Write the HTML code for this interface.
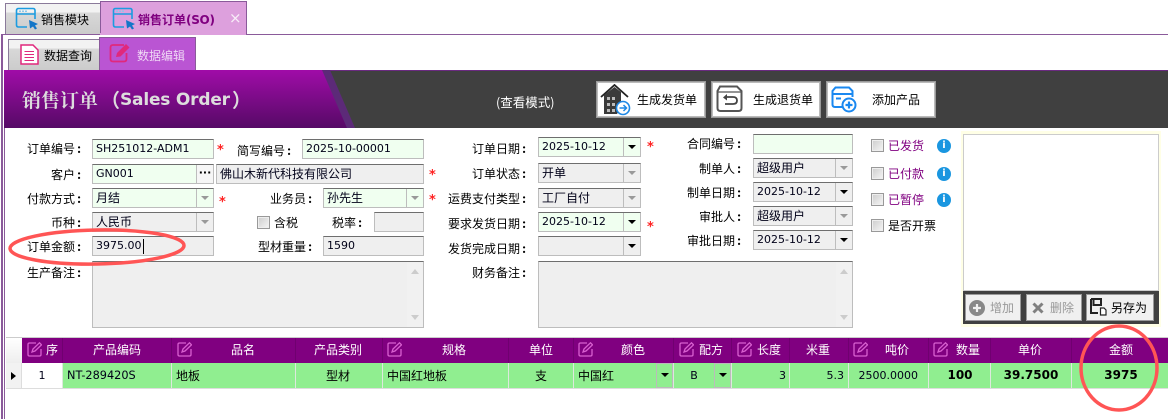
<!DOCTYPE html>
<html lang="zh"><head><meta charset="utf-8"><title>销售订单</title>
<style>
html,body{margin:0;padding:0;background:#fff}
#p{position:relative;width:1168px;height:419px;overflow:hidden;background:#fff;font:12px/16px "WenQuanYi Zen Hei","Noto Sans CJK SC",sans-serif;color:#000}
#p div,#p span,#p svg{position:absolute;box-sizing:border-box;white-space:nowrap}
.lb{text-align:right;height:16px;padding-right:1px}
.lb span{position:static!important;display:inline-block;width:6px;text-align:right;font-weight:bold}
.f{border:1px solid #bdbdbd;border-top-color:#6e6e6e;background:#efefef;height:20px;padding-left:3px;line-height:18px;color:#000018;font-family:"DejaVu Sans","WenQuanYi Zen Hei",sans-serif;font-size:11px}
.cj{font-family:"WenQuanYi Zen Hei","Noto Sans CJK SC",sans-serif;font-size:12px}
.g{background:#f0fff0}
.ar{right:0;top:0;bottom:0;width:17px;border-left:1px solid #bdbdbd}
.ar:after{content:"";position:absolute;left:4px;top:7px;border:4px solid transparent;border-top:4px solid #000;border-bottom:0}
.dis:after{border-top-color:#999}
.st{color:#f22;font:bold 13px/13px "DejaVu Sans",sans-serif}
.cb{width:13px;height:13px;border:1px solid #999;background:linear-gradient(135deg,#ccc,#f6f6f6);box-shadow:inset 0 0 0 1px #eee}
.pu{color:#800080}
.i{width:14px;height:14px;border-radius:50%;background:#1a96e0;color:#fff;text-align:center;font:bold 10px/14px "DejaVu Sans",sans-serif}
.b{background:#fff;border:1px solid #999;box-shadow:inset 0 0 0 1px #bbb;height:37px;top:81px;width:110px}
.h{top:338px;height:25px;line-height:24px;color:#fff;text-align:center;transform:translateX(-50%)}
.ic{top:342px;width:15px;height:15px}
.s{top:363px;width:1px;height:25px;background:#dde8dd}
.hs{top:338px;width:1px;height:25px;background:#700070}
.c{top:363px;height:25px;line-height:25px;font-size:12px}
.n{font-family:"DejaVu Sans",sans-serif;font-size:11px;color:#000018}
.ct{transform:translateX(-50%)}
.bd{font:bold 12px/25px "DejaVu Sans",sans-serif}
.bt{background:#f0f0f0;border:1px solid #999;top:294px;height:27px;line-height:26px}
</style></head><body><div id="p">

<!-- top tabs -->
<div style="left:5px;top:3px;width:96px;height:32px;border:1px solid #8a7a9a;border-bottom:0;background:linear-gradient(#f2f2f2 0,#f2f2f2 8px,#d8d8d8 9px,#cbcbcb 100%)"></div>
<svg style="left:15px;top:7px" width="23" height="23" viewBox="0 0 23 23"><path d="M12 20H3.500Q1.500 20 1.500 18V3.500Q1.500 1.500 3.500 1.500H18Q20 1.500 20 3.500V12M2 7H20" fill="none" stroke="#1c9ce0" stroke-width="1.600"/><path d="M4 4.300h2M7 4.300h2M10 4.300h2" stroke="#8cc8ea" stroke-width="1.500"/><path d="M14 13l9 4-3 1.500 2 3-2 1-2-3-3 2z" fill="#1476c8"/></svg>
<div style="left:41px;top:12px">销售模块</div>
<div style="left:100px;top:1px;width:147px;height:34px;border:1px solid #8a5a9a;border-bottom:0;background:#dda0dd"></div>
<svg style="left:112px;top:7px" width="23" height="23" viewBox="0 0 23 23"><path d="M12 20H3.500Q1.500 20 1.500 18V3.500Q1.500 1.500 3.500 1.500H18Q20 1.500 20 3.500V12M2 7H20" fill="none" stroke="#1c9ce0" stroke-width="1.600"/><path d="M4 4.300h2M7 4.300h2M10 4.300h2" stroke="#8cc8ea" stroke-width="1.500"/><path d="M14 13l9 4-3 1.500 2 3-2 1-2-3-3 2z" fill="#1476c8"/></svg>
<div style="left:138px;top:10px;color:#800080;font-weight:bold;font-size:12px;line-height:20px">销售订单<span style="position:static;font:bold 12px 'DejaVu Sans',sans-serif;letter-spacing:-.3px">(SO)</span></div>
<div style="left:229px;top:8px;color:#f8eef8;font:15px/20px 'DejaVu Sans',sans-serif">×</div>

<!-- outer frame -->
<div style="left:1px;top:34px;width:1167px;height:1px;background:#8a5a9a"></div>
<div style="left:100px;top:33px;width:146px;height:2px;background:#dda0dd"></div>
<div style="left:1px;top:34px;width:2px;height:385px;background:#8a5a9a"></div>
<div style="left:4px;top:70px;width:1px;height:349px;background:#8a5a9a"></div>

<!-- sub tabs -->
<div style="left:8px;top:39px;width:92px;height:32px;border:1px solid #8a7a9a;border-bottom:0;background:linear-gradient(#f2f2f2 0,#f2f2f2 8px,#d8d8d8 9px,#cbcbcb 100%)"></div>
<svg style="left:20px;top:44px" width="19" height="21" viewBox="0 0 19 21"><path d="M1 1H13L18 6V20H1Z" fill="#fff" stroke="#e0287c" stroke-width="1.500"/><path d="M4.500 7.500H14M4.500 10.500H14M4.500 13.500H14M4.500 16.500H14" stroke="#e0287c" stroke-width="1"/></svg>
<div style="left:44px;top:48px;color:#000">数据查询</div>
<div style="left:99px;top:37px;width:97px;height:34px;border:1px solid #8a5a9a;border-bottom:0;background:#ba55d3"></div>
<svg style="left:109px;top:43px" width="22" height="20" viewBox="0 0 22 20"><path d="M15 2H4Q1.500 2 1.500 4.500V16Q1.500 18.500 4 18.500H15Q17.500 18.500 17.500 16V10" fill="none" stroke="#e0287c" stroke-width="1.800"/><path d="M7 14l1-4L17 1l3.500 3.500L11.500 13.500z" fill="#e0287c"/></svg>
<div style="left:137px;top:48px;color:#efd8f5">数据编辑</div>

<!-- header -->
<div style="left:4px;top:70px;width:1164px;height:58px;background:#404040;border-top:1px solid #6a2a80"></div>
<svg style="left:4px;top:70px" width="360" height="58" viewBox="0 0 360 58"><defs><linearGradient id="hg" x1="0" y1="0" x2="0" y2="1"><stop offset="0" stop-color="#a00ca8"/><stop offset="1" stop-color="#560a66"/></linearGradient></defs><path d="M317 0H326L351 58H342Z" fill="#5c2a78"/><path d="M0 0H318L343 58H0Z" fill="url(#hg)"/></svg>
<div style="left:22px;top:88px;color:#ddd;font:bold 19px/24px 'Noto Serif CJK SC','Noto Sans CJK SC',serif">销售订单</div>
<div style="left:101px;top:88px;color:#ddd;font:bold 19px/24px 'Noto Sans CJK SC',sans-serif">（</div>
<div style="left:120px;top:88px;color:#ddd;font:bold 17px/24px 'DejaVu Sans',sans-serif;letter-spacing:-.2px">Sales Order</div>
<div style="left:232px;top:88px;color:#ddd;font:bold 19px/24px 'Noto Sans CJK SC',sans-serif">）</div>
<div style="left:496px;top:94px;color:#fff;font-size:12.500px">(查看模式)</div>

<div class="b" style="left:596px"></div>
<svg style="left:600px;top:84px" width="31" height="32" viewBox="0 0 31 32"><path d="M1 13L14.500 1 28 13" fill="none" stroke="#222" stroke-width="1.800"/><path d="M4 11L14.500 3 21 8V23L17 30H4Z" fill="#3a3a3a"/><path d="M7 13h3v3H7zM12 13h3v3h-3zM7 19h3v3H7zM12 19h3v3h-3zM7 25h3v3H7zM12 25h3v3h-3z" fill="#bbb"/><circle cx="23" cy="24" r="6.500" fill="#fff" stroke="#1e88e5" stroke-width="1.600"/><path d="M19.500 24H26M23.500 21L26.500 24 23.500 27" fill="none" stroke="#1e88e5" stroke-width="1.500"/></svg>
<div style="left:637px;top:92px">生成发货单</div>
<div class="b" style="left:711px"></div>
<svg style="left:716px;top:85px" width="27" height="28" viewBox="0 0 27 28"><path d="M4 1.500H21L25.500 6V23Q25.500 26 22.500 26H4.500Q1.500 26 1.500 23V6Z" fill="none" stroke="#555" stroke-width="2"/><path d="M2 7H25" stroke="#555" stroke-width="1.200"/><path d="M9 12H17Q21 12 21 15.500T17 19H9" fill="none" stroke="#444" stroke-width="1.800"/><path d="M11 9L7 12.500 11 15.500Z" fill="#444"/></svg>
<div style="left:753px;top:92px">生成退货单</div>
<div class="b" style="left:826px"></div>
<svg style="left:831px;top:86px" width="26" height="27" viewBox="0 0 26 27"><path d="M13 21H4Q1.500 21 1.500 18.500V5L4.500 1.500H18L21.500 5V11M2 8H21M5 12.500H10" fill="none" stroke="#1a88f0" stroke-width="2"/><circle cx="18" cy="19" r="6.500" fill="#fff" stroke="#1a88f0" stroke-width="2"/><path d="M14.500 19H21.500M18 15.500V22.500" stroke="#1a88f0" stroke-width="2.200"/></svg>
<div style="left:872px;top:92px">添加产品</div>

<!-- left col labels -->
<div class="lb" style="left:12px;width:70px;top:141px">订单编号<span>:</span></div>
<div class="lb" style="left:222px;width:70px;top:143px">简写编号<span>:</span></div>
<div class="lb" style="left:12px;width:70px;top:167px">客户<span>:</span></div>
<div class="lb" style="left:12px;width:70px;top:191px">付款方式<span>:</span></div>
<div class="lb" style="left:243px;width:70px;top:191px">业务员<span>:</span></div>
<div class="lb" style="left:12px;width:70px;top:215px">币种<span>:</span></div>
<div class="lb" style="left:293px;width:70px;top:215px">税率<span>:</span></div>
<div class="lb" style="left:12px;width:70px;top:239px">订单金额<span>:</span></div>
<div class="lb" style="left:243px;width:70px;top:239px">型材重量<span>:</span></div>
<div class="lb" style="left:12px;width:70px;top:265px">生产备注<span>:</span></div>

<div class="f g" style="left:92px;top:139px;width:122px">SH251012-ADM1</div>
<div class="st" style="left:217px;top:144px">*</div>
<div class="f g" style="left:302px;top:139px;width:122px">2025-10-00001</div>
<div class="f g" style="left:92px;top:164px;width:122px">GN001<div style="right:0;top:0;bottom:0;width:17px;border-left:1px solid #bdbdbd;background:#f6f6f6;color:#000;font:bold 11px/16px 'DejaVu Sans',sans-serif;text-align:center">···</div></div>
<div class="f cj" style="left:216px;top:164px;width:208px">佛山木新代科技有限公司</div>
<div class="st" style="left:429px;top:169px">*</div>
<div class="f g cj" style="left:92px;top:188px;width:122px">月结<div class="ar dis"></div></div>
<div class="st" style="left:219px;top:196px">*</div>
<div class="f g cj" style="left:323px;top:188px;width:101px">孙先生<div class="ar dis"></div></div>
<div class="st" style="left:429px;top:194px">*</div>
<div class="f cj" style="left:92px;top:212px;width:122px">人民币<div class="ar dis"></div></div>
<div class="cb" style="left:257px;top:216px"></div>
<div style="left:274px;top:215px">含税</div>
<div class="f" style="left:374px;top:212px;width:50px"></div>
<div class="f" style="left:92px;top:236px;width:122px">3975.00<div style="left:50px;top:2px;width:1px;height:15px;background:#000"></div></div>
<div class="f" style="left:323px;top:236px;width:101px">1590</div>
<div class="f" style="left:92px;top:261px;width:332px;height:67px"><div style="right:0;top:0;bottom:0;width:16px;background:#f1f1f1"></div><div style="right:4px;top:7px;border:4px solid transparent;border-bottom:5px solid #ccc;border-top:0"></div><div style="right:4px;bottom:7px;border:4px solid transparent;border-top:5px solid #ccc;border-bottom:0"></div></div>

<!-- middle col -->
<div class="lb" style="left:457px;width:70px;top:141px">订单日期<span>:</span></div>
<div class="lb" style="left:457px;width:70px;top:166px">订单状态<span>:</span></div>
<div class="lb" style="left:437px;width:90px;top:191px">运费支付类型<span>:</span></div>
<div class="lb" style="left:437px;width:90px;top:216px">要求发货日期<span>:</span></div>
<div class="lb" style="left:437px;width:90px;top:241px">发货完成日期<span>:</span></div>
<div class="lb" style="left:457px;width:70px;top:265px">财务备注<span>:</span></div>
<div class="f g" style="left:538px;top:137px;width:103px">2025-10-12<div class="ar"></div></div>
<div class="st" style="left:647px;top:141px">*</div>
<div class="f cj" style="left:538px;top:163px;width:103px">开单<div class="ar dis"></div></div>
<div class="f cj" style="left:538px;top:188px;width:103px">工厂自付<div class="ar dis"></div></div>
<div class="f g" style="left:538px;top:212px;width:103px">2025-10-12<div class="ar"></div></div>
<div class="st" style="left:647px;top:221px">*</div>
<div class="f" style="left:538px;top:236px;width:103px"><div class="ar"></div></div>
<div class="f" style="left:538px;top:261px;width:315px;height:67px"><div style="right:0;top:0;bottom:0;width:16px;background:#f1f1f1"></div><div style="right:4px;top:7px;border:4px solid transparent;border-bottom:5px solid #ccc;border-top:0"></div><div style="right:4px;bottom:7px;border:4px solid transparent;border-top:5px solid #ccc;border-bottom:0"></div></div>

<div class="lb" style="left:672px;width:70px;top:136px">合同编号<span>:</span></div>
<div class="lb" style="left:672px;width:70px;top:161px">制单人<span>:</span></div>
<div class="lb" style="left:672px;width:70px;top:185px">制单日期<span>:</span></div>
<div class="lb" style="left:672px;width:70px;top:209px">审批人<span>:</span></div>
<div class="lb" style="left:672px;width:70px;top:233px">审批日期<span>:</span></div>
<div class="f g" style="left:753px;top:134px;width:100px"></div>
<div class="f cj" style="left:753px;top:158px;width:100px">超级用户<div class="ar dis"></div></div>
<div class="f" style="left:753px;top:182px;width:100px">2025-10-12<div class="ar"></div></div>
<div class="f cj" style="left:753px;top:206px;width:100px">超级用户<div class="ar dis"></div></div>
<div class="f" style="left:753px;top:230px;width:100px">2025-10-12<div class="ar"></div></div>

<!-- right checks -->
<div class="cb" style="left:871px;top:139px"></div><div class="pu" style="left:888px;top:138px">已发货</div><div class="i" style="left:937px;top:139px">i</div>
<div class="cb" style="left:871px;top:167px"></div><div class="pu" style="left:888px;top:166px">已付款</div><div class="i" style="left:937px;top:167px">i</div>
<div class="cb" style="left:871px;top:193px"></div><div class="pu" style="left:888px;top:192px">已暂停</div><div class="i" style="left:937px;top:193px">i</div>
<div class="cb" style="left:871px;top:219px"></div><div style="left:888px;top:218px">是否开票</div>

<!-- image panel -->
<div style="left:961px;top:131px;width:200px;height:196px;background:#ffffe6"></div>
<div style="left:963px;top:134px;width:196px;height:157px;background:#fff;border:1px solid #ccc"></div>
<div style="left:963px;top:291px;width:196px;height:33px;background:#404040"></div>
<div class="bt" style="left:965px;width:56px"></div>
<svg style="left:969px;top:300px" width="16" height="16" viewBox="0 0 16 16"><circle cx="8" cy="8" r="8" fill="#888"/><path d="M4 8H12M8 4V12" stroke="#f0f0f0" stroke-width="2.200"/></svg>
<div style="left:990px;top:300px;color:#999">增加</div>
<div class="bt" style="left:1026px;width:56px"></div>
<svg style="left:1032px;top:302px" width="12" height="12" viewBox="0 0 12 12"><path d="M1.500 1.500L10.500 10.500M10.500 1.500L1.500 10.500" stroke="#808080" stroke-width="3"/></svg>
<div style="left:1050px;top:300px;color:#999">删除</div>
<div class="bt" style="left:1086px;width:68px"></div>
<svg style="left:1090px;top:298px" width="17" height="18" viewBox="0 0 17 18"><path d="M1 1H11V7H3.500V1M1 1V15H8" fill="none" stroke="#222" stroke-width="2"/><path d="M10.500 10H14L16 12V17H10.500Z" fill="#fff" stroke="#222" stroke-width="1.200"/></svg>
<div style="left:1111px;top:300px">另存为</div>

<!-- grid -->
<div style="left:6px;top:337px;width:1162px;height:1px;background:#ccc"></div>
<div style="left:6px;top:338px;width:16px;height:25px;background:linear-gradient(#fff,#eee)"></div>
<div style="left:22px;top:338px;width:1146px;height:25px;background:#800080"></div>
<div style="left:6px;top:363px;width:16px;height:25px;background:#f2f2f2;border-right:1px solid #ddd"></div>
<div style="left:22px;top:363px;width:41px;height:25px;background:#fff"></div>
<div style="left:63px;top:363px;width:1105px;height:25px;background:#90ee90"></div>
<div style="left:6px;top:388px;width:1162px;height:1px;background:#ddd"></div>
<div style="left:11px;top:372px;border:4px solid transparent;border-left:5px solid #000;border-right:0"></div>

<div class="hs" style="left:62px"></div><div class="hs" style="left:171px"></div><div class="hs" style="left:295px"></div><div class="hs" style="left:382px"></div><div class="hs" style="left:508px"></div><div class="hs" style="left:573px"></div><div class="hs" style="left:673px"></div><div class="hs" style="left:731px"></div><div class="hs" style="left:789px"></div><div class="hs" style="left:848px"></div><div class="hs" style="left:928px"></div><div class="hs" style="left:990px"></div><div class="hs" style="left:1071px"></div>
<div class="s" style="left:62px"></div><div class="s" style="left:171px"></div><div class="s" style="left:295px"></div><div class="s" style="left:382px"></div><div class="s" style="left:508px"></div><div class="s" style="left:573px"></div><div class="s" style="left:673px"></div><div class="s" style="left:731px"></div><div class="s" style="left:789px"></div><div class="s" style="left:848px"></div><div class="s" style="left:928px"></div><div class="s" style="left:990px"></div><div class="s" style="left:1071px"></div>

<svg class="ic" style="left:27px" viewBox="0 0 15 15"><path d="M9 1H2.500Q1 1 1 2.500V12.500Q1 14 2.500 14H12.500Q14 14 14 12.500V7M5 10L6 7 12.500 .8 14.500 2.800 8 9Z" fill="none" stroke="#d860d0" stroke-width="1.300"/></svg>
<svg class="ic" style="left:177px" viewBox="0 0 15 15"><path d="M9 1H2.500Q1 1 1 2.500V12.500Q1 14 2.500 14H12.500Q14 14 14 12.500V7M5 10L6 7 12.500 .8 14.500 2.800 8 9Z" fill="none" stroke="#d860d0" stroke-width="1.300"/></svg>
<svg class="ic" style="left:387px" viewBox="0 0 15 15"><path d="M9 1H2.500Q1 1 1 2.500V12.500Q1 14 2.500 14H12.500Q14 14 14 12.500V7M5 10L6 7 12.500 .8 14.500 2.800 8 9Z" fill="none" stroke="#d860d0" stroke-width="1.300"/></svg>
<svg class="ic" style="left:578px" viewBox="0 0 15 15"><path d="M9 1H2.500Q1 1 1 2.500V12.500Q1 14 2.500 14H12.500Q14 14 14 12.500V7M5 10L6 7 12.500 .8 14.500 2.800 8 9Z" fill="none" stroke="#d860d0" stroke-width="1.300"/></svg>
<svg class="ic" style="left:679px" viewBox="0 0 15 15"><path d="M9 1H2.500Q1 1 1 2.500V12.500Q1 14 2.500 14H12.500Q14 14 14 12.500V7M5 10L6 7 12.500 .8 14.500 2.800 8 9Z" fill="none" stroke="#d860d0" stroke-width="1.300"/></svg>
<svg class="ic" style="left:737px" viewBox="0 0 15 15"><path d="M9 1H2.500Q1 1 1 2.500V12.500Q1 14 2.500 14H12.500Q14 14 14 12.500V7M5 10L6 7 12.500 .8 14.500 2.800 8 9Z" fill="none" stroke="#d860d0" stroke-width="1.300"/></svg>
<svg class="ic" style="left:853px" viewBox="0 0 15 15"><path d="M9 1H2.500Q1 1 1 2.500V12.500Q1 14 2.500 14H12.500Q14 14 14 12.500V7M5 10L6 7 12.500 .8 14.500 2.800 8 9Z" fill="none" stroke="#d860d0" stroke-width="1.300"/></svg>
<svg class="ic" style="left:933px" viewBox="0 0 15 15"><path d="M9 1H2.500Q1 1 1 2.500V12.500Q1 14 2.500 14H12.500Q14 14 14 12.500V7M5 10L6 7 12.500 .8 14.500 2.800 8 9Z" fill="none" stroke="#d860d0" stroke-width="1.300"/></svg>

<div class="h" style="left:52px">序</div>
<div class="h" style="left:117px">产品编码</div>
<div class="h" style="left:243px">品名</div>
<div class="h" style="left:338px">产品类别</div>
<div class="h" style="left:454px">规格</div>
<div class="h" style="left:541px">单位</div>
<div class="h" style="left:633px">颜色</div>
<div class="h" style="left:711px">配方</div>
<div class="h" style="left:769px">长度</div>
<div class="h" style="left:818px">米重</div>
<div class="h" style="left:897px">吨价</div>
<div class="h" style="left:968px">数量</div>
<div class="h" style="left:1030px">单价</div>
<div class="h" style="left:1121px">金额</div>

<div class="c n ct" style="left:42px">1</div>
<div class="c n" style="left:67px;font-size:11.300px">NT-289420S</div>
<div class="c" style="left:176px">地板</div>
<div class="c ct" style="left:338px">型材</div>
<div class="c" style="left:387px">中国红地板</div>
<div class="c ct" style="left:541px">支</div>
<div class="c" style="left:578px">中国红</div>
<div class="c n ct" style="left:694px">B</div>
<div class="f" style="left:656px;top:363px;width:17px;height:25px;background:#90ee90;border-color:#bbb;padding:0"><div style="left:4px;top:9px;border:4px solid transparent;border-top:4px solid #000;border-bottom:0"></div></div>
<div class="f" style="left:714px;top:363px;width:17px;height:25px;background:#90ee90;border-color:#bbb;padding:0"><div style="left:4px;top:9px;border:4px solid transparent;border-top:4px solid #000;border-bottom:0"></div></div>
<div class="c n" style="right:382px">3</div>
<div class="c n" style="right:324px">5.3</div>
<div class="c n" style="right:250px">2500.0000</div>
<div class="c bd ct" style="left:960px">100</div>
<div class="c bd ct" style="left:1031px">39.7500</div>
<div class="c bd ct" style="left:1121px">3975</div>

<!-- red annotation -->
<svg style="left:0;top:220px" width="200" height="50" viewBox="0 0 200 50"><ellipse cx="97" cy="27" rx="87" ry="17" transform="rotate(-1 97 27)" fill="none" stroke="#f55" stroke-width="3.500"/></svg>
<svg style="left:1072px;top:320px" width="96" height="99" viewBox="0 0 96 99"><ellipse cx="47" cy="48" rx="38" ry="42" fill="none" stroke="#f55" stroke-width="3.500"/></svg>
</div></body></html>
